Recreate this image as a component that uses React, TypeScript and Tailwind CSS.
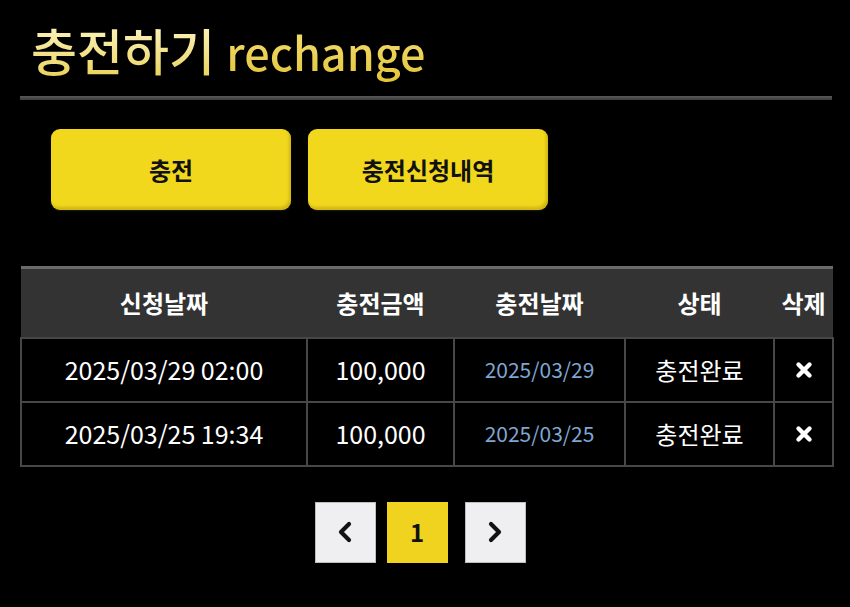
const rows = [
  { requested: "2025/03/29 02:00", amount: "100,000", charged: "2025/03/29", status: "충전완료" },
  { requested: "2025/03/25 19:34", amount: "100,000", charged: "2025/03/25", status: "충전완료" },
];

const font = "font-['Noto_Sans_CJK_KR','Noto_Sans',sans-serif]";

function CloseIcon() {
  return (
    <svg width="18" height="18" viewBox="0 0 18 18" className="mx-auto">
      <path d="M3.5 3.5 L14.5 14.5 M14.5 3.5 L3.5 14.5" stroke="#fff" strokeWidth="4.4" strokeLinecap="round" />
    </svg>
  );
}

function Chevron({ dir }: { dir: "left" | "right" }) {
  return (
    <svg width="20" height="24" viewBox="0 0 20 24">
      <path
        d={dir === "left" ? "M14 4 L6 12 L14 20" : "M6 4 L14 12 L6 20"}
        fill="none"
        stroke="#111"
        strokeWidth="4.2"
        strokeLinecap="round"
        strokeLinejoin="round"
      />
    </svg>
  );
}

const cell = "border-2 border-[#474747]";
const tab =
  "h-[81px] w-[240px] rounded-[9px] bg-[#f1d81d] text-[24px] font-bold text-[#111] shadow-[inset_-2px_-3px_3px_rgba(150,120,0,0.35),0_1px_2px_rgba(255,255,255,0.1)]";

export default function App() {
  return (
    <div className={`min-h-[607px] w-[850px] overflow-hidden bg-black ${font}`}>
      <div className="ml-[20px] w-[812px]">
        {/* page title */}
        <h1 className="pl-[11px] pt-[12px] h-[96px] text-[50px] font-medium leading-[74px] whitespace-nowrap">
          <span className="bg-gradient-to-b from-[#fff9d0] to-[#e9cf45] bg-clip-text text-transparent">충전하기</span>{" "}
          <span className="bg-gradient-to-b from-[#f4e27a] to-[#e3c431] bg-clip-text text-transparent text-[45px]">rechange</span>
        </h1>
        <div className="h-[4px] bg-gradient-to-b from-[#5a5a5a] to-[#3c3c3c]" />

        {/* tab buttons */}
        <div className="flex gap-[17px] pl-[31px] pt-[29px]">
          <button className={tab}>충전</button>
          <button className={tab}>충전신청내역</button>
        </div>

        {/* history table */}
        <table className="mt-[56px] w-[812px] table-fixed border-collapse text-white">
          <colgroup>
            <col className="w-[286px]" />
            <col className="w-[147px]" />
            <col className="w-[171px]" />
            <col className="w-[149px]" />
            <col className="w-[59px]" />
          </colgroup>
          <thead>
            <tr className="h-[70px] border-t-[3px] border-[#6b6b6b] bg-[#333333] text-[24px] font-bold">
              <th>신청날짜</th>
              <th>충전금액</th>
              <th>충전날짜</th>
              <th>상태</th>
              <th>삭제</th>
            </tr>
          </thead>
          <tbody>
            {rows.map((row) => (
              <tr key={row.requested} className="h-[64px] text-center">
                <td className={`${cell} text-[25px]`}>{row.requested}</td>
                <td className={`${cell} text-[25px]`}>{row.amount}</td>
                <td className={`${cell} text-[21px] text-[#7ea7d3]`}>{row.charged}</td>
                <td className={`${cell} text-[24px]`}>{row.status}</td>
                <td className={cell}>
                  <CloseIcon />
                </td>
              </tr>
            ))}
          </tbody>
        </table>

        {/* pagination */}
        <div className="mt-[35px] flex justify-center pr-[12px]">
          <button className="flex h-[61px] w-[61px] items-center justify-center border border-[#bdbdbd] bg-[#efeef1]">
            <Chevron dir="left" />
          </button>
          <button className="ml-[11px] flex h-[61px] w-[61px] items-center justify-center bg-[#f0d31f] text-[24px] font-bold text-[#111]">
            1
          </button>
          <button className="ml-[17px] flex h-[61px] w-[61px] items-center justify-center border border-[#bdbdbd] bg-[#efeef1]">
            <Chevron dir="right" />
          </button>
        </div>
      </div>
    </div>
  );
}
